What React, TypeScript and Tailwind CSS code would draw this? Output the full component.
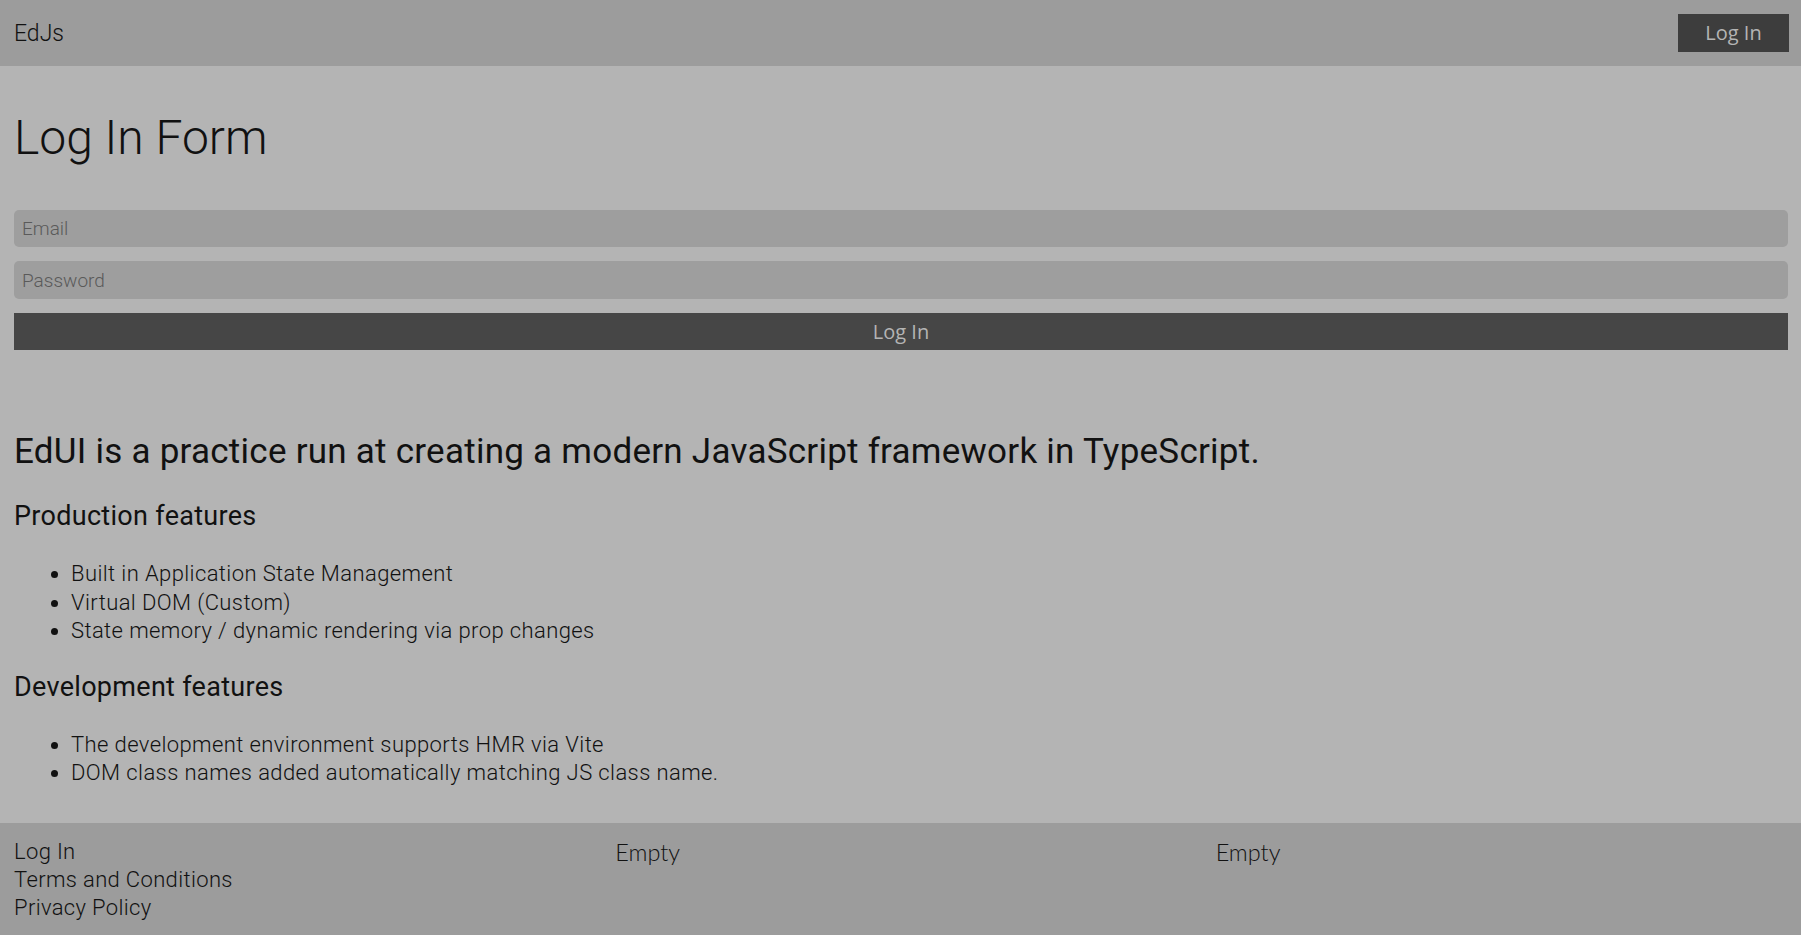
const roboto = "font-['Roboto',sans-serif]";

function Header() {
  return (
    <header className="flex h-[66px] items-center justify-between bg-[#9c9c9c] pl-[14px] pr-[12px]">
      <span className={`${roboto} pt-[2px] text-[23px] font-light text-[#111]`}>EdJs</span>
      <button className="h-[38px] w-[111px] bg-[#3d3d3d] font-['Open_Sans',sans-serif] text-[20px] text-[#b4b4b4]">
        Log In
      </button>
    </header>
  );
}

function LoginForm() {
  return (
    <form className="pt-[44px] flex flex-col" onSubmit={(e) => e.preventDefault()}>
      <h1 className={`${roboto} text-[48px] leading-[56px] font-light text-[#111]`}>Log In Form</h1>
      <div className="mt-[44px] flex flex-col gap-[14px]">
        <input
          type="email"
          placeholder="Email"
          className={`${roboto} h-[37px] rounded-[5px] bg-[#9e9e9e] px-[8px] text-[19px] font-light text-[#111] outline-none placeholder:text-[#5a5a5a]`}
        />
        <input
          type="password"
          placeholder="Password"
          className={`${roboto} h-[38px] rounded-[5px] bg-[#9e9e9e] px-[8px] text-[19px] font-light text-[#111] outline-none placeholder:text-[#5a5a5a]`}
        />
        <button
          type="submit"
          className="h-[37px] bg-[#464646] font-['Open_Sans',sans-serif] text-[20px] text-[#b4b4b4]"
        >
          Log In
        </button>
      </div>
    </form>
  );
}

function FeatureList({ items }: { items: string[] }) {
  return (
    <ul
      className={`${roboto} mt-[30px] list-disc pl-[57px] text-[22px] leading-[28.5px] font-light tracking-[0.4px] text-[#111]`}
    >
      {items.map((item) => (
        <li key={item}>{item}</li>
      ))}
    </ul>
  );
}

function About() {
  return (
    <section className="mt-[82px]">
      <p className={`${roboto} text-[35px] leading-[40px] tracking-[0.25px] text-[#111]`}>
        EdUI is a practice run at creating a modern JavaScript framework in TypeScript.
      </p>
      <h2 className={`${roboto} mt-[30px] text-[27px] leading-[28px] tracking-[0.3px] text-[#111]`}>
        Production features
      </h2>
      <FeatureList
        items={[
          "Built in Application State Management",
          "Virtual DOM (Custom)",
          "State memory / dynamic rendering via prop changes",
        ]}
      />
      <h2 className={`${roboto} mt-[27px] text-[27px] leading-[28px] tracking-[0.3px] text-[#111]`}>
        Development features
      </h2>
      <FeatureList
        items={[
          "The development environment supports HMR via Vite",
          "DOM class names added automatically matching JS class name.",
        ]}
      />
    </section>
  );
}

function Footer() {
  return (
    <footer className="grid grid-cols-3 bg-[#9c9c9c] pt-[15px] pb-[12px]">
      <div
        className={`${roboto} flex flex-col pl-[14px] text-[22px] leading-[28px] font-light tracking-[0.35px] text-[#111]`}
      >
        <a>Log In</a>
        <a>Terms and Conditions</a>
        <a>Privacy Policy</a>
      </div>
      <div className="pl-[15px] font-['Lato',sans-serif] text-[23.5px] leading-[28px] font-light text-[#111]">
        Empty
      </div>
      <div className="pl-[15px] font-['Lato',sans-serif] text-[23.5px] leading-[28px] font-light text-[#111]">
        Empty
      </div>
    </footer>
  );
}

export default function App() {
  return (
    <div className="min-h-screen bg-[#9c9c9c]">
      <div className="bg-[#b4b4b4]">
        <Header />
        <main className="pl-[14px] pr-[13px] pb-[35px]">
          <LoginForm />
          <About />
        </main>
      </div>
      <Footer />
    </div>
  );
}
